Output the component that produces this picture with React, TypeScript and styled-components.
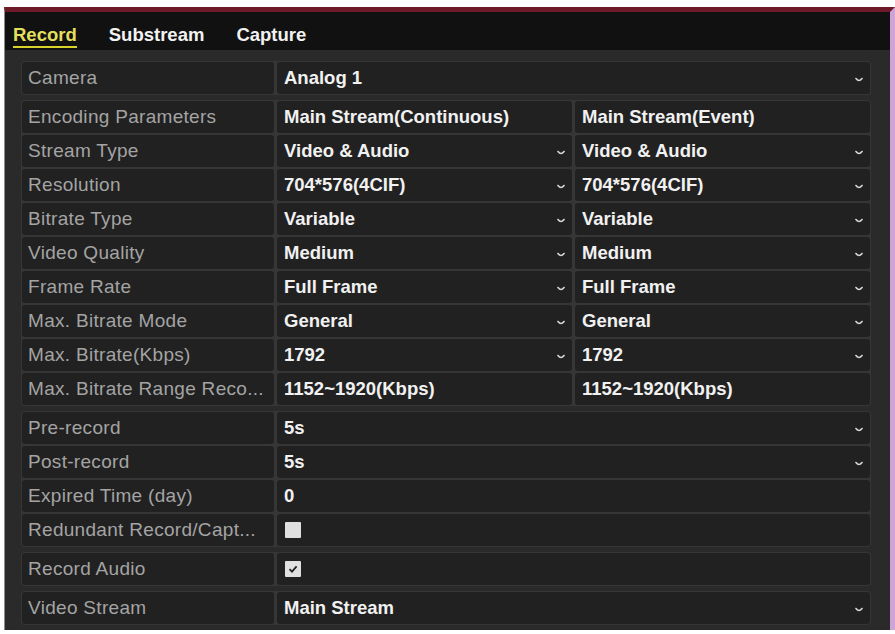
import React from 'react';
import styled, { createGlobalStyle } from 'styled-components';

interface fieldInt {
  label: string;
  values?: string[];
  select?: boolean;
  check?: 'on' | 'off';
}

const groups: fieldInt[][] = [
  [{ label: 'Camera', values: ['Analog 1'], select: true }],
  [
    { label: 'Encoding Parameters', values: ['Main Stream(Continuous)', 'Main Stream(Event)'] },
    { label: 'Stream Type', values: ['Video & Audio', 'Video & Audio'], select: true },
    { label: 'Resolution', values: ['704*576(4CIF)', '704*576(4CIF)'], select: true },
    { label: 'Bitrate Type', values: ['Variable', 'Variable'], select: true },
    { label: 'Video Quality', values: ['Medium', 'Medium'], select: true },
    { label: 'Frame Rate', values: ['Full Frame', 'Full Frame'], select: true },
    { label: 'Max. Bitrate Mode', values: ['General', 'General'], select: true },
    { label: 'Max. Bitrate(Kbps)', values: ['1792', '1792'], select: true },
    { label: 'Max. Bitrate Range Reco...', values: ['1152~1920(Kbps)', '1152~1920(Kbps)'] },
  ],
  [
    { label: 'Pre-record', values: ['5s'], select: true },
    { label: 'Post-record', values: ['5s'], select: true },
    { label: 'Expired Time (day)', values: ['0'] },
    { label: 'Redundant Record/Capt...', check: 'off' },
  ],
  [{ label: 'Record Audio', check: 'on' }],
  [{ label: 'Video Stream', values: ['Main Stream'], select: true }],
];

const tabs = ['Record', 'Substream', 'Capture'];

const Chevron: React.FC = () => (
  <ChevronIcon width="8" height="6" viewBox="0 0 8 6">
    <path d="M1 1.5 Q4 5.5 7 1.5" fill="none" stroke="currentColor" strokeWidth="1.6" strokeLinecap="round" />
  </ChevronIcon>
);

const App: React.FC = () => {
  const renderValue = (field: fieldInt) => {
    if (field.check) {
      return (
        <ValueCell>
          <CheckBox>
            {field.check === 'on' && (
              <svg width="12" height="12" viewBox="0 0 12 12">
                <path d="M2.5 6.2 L5 8.6 L9.6 3.4" fill="none" stroke="#222" strokeWidth="1.8" />
              </svg>
            )}
          </CheckBox>
        </ValueCell>
      );
    }
    return (field.values || []).map((value, idx) => (
      <ValueCell key={idx}>
        <ValueText>{value}</ValueText>
        {field.select && <Chevron />}
      </ValueCell>
    ));
  };

  return (
    <>
      <GlobalStyle />
      <Frame>
        <TabBar>
          {tabs.map((tab, idx) => (
            <Tab key={tab} active={idx === 0}>
              {tab}
            </Tab>
          ))}
        </TabBar>
        <Body>
          {groups.map((group, gIdx) => (
            <Group key={gIdx}>
              {group.map((field) => (
                <Row key={field.label} split={(field.values || []).length > 1}>
                  <LabelCell>{field.label}</LabelCell>
                  {renderValue(field)}
                </Row>
              ))}
            </Group>
          ))}
        </Body>
      </Frame>
    </>
  );
};

export default App;

const GlobalStyle = createGlobalStyle`
  body {
    margin: 0;
    background: #ffffff;
    font-family: "Liberation Sans", Arial, sans-serif;
  }
`;

const Frame = styled.div`
  box-sizing: border-box;
  width: 891px;
  margin: 7px 0 0 4px;
  background: #2a2a2a;
  border-top: 5px solid #6e1a29;
  border-left: 1px solid #8c8c8c;
  border-right: 5px solid #cfa2d8;
  padding-bottom: 5px;
`;

const TabBar = styled.div`
  display: flex;
  gap: 32px;
  height: 38px;
  padding-left: 8px;
  background: #111111;
  box-sizing: border-box;
`;

const Tab = styled.div<{ active?: boolean }>`
  margin-top: 12px;
  height: 22px;
  line-height: 22px;
  font-size: 18.5px;
  font-weight: bold;
  color: ${(p) => (p.active ? '#e4df5c' : '#f2f2f2')};
  border-bottom: 2px solid ${(p) => (p.active ? '#d9d22a' : 'transparent')};
`;

const Body = styled.div`
  display: flex;
  flex-direction: column;
  gap: 5px;
  padding: 11px 19px 0 16px;
`;

const Group = styled.div`
  display: flex;
  flex-direction: column;
  gap: 2px;
  padding: 1px;
  background: #363636;
  border-radius: 4px;
`;

const Row = styled.div<{ split?: boolean }>`
  display: grid;
  grid-template-columns: ${(p) => (p.split ? '252px 1fr 1fr' : '252px 1fr')};
  column-gap: 3px;
  height: 32px;
`;

const Cell = styled.div`
  display: flex;
  align-items: center;
  background: #212121;
  border-radius: 3px;
  min-width: 0;
`;

const LabelCell = styled(Cell)`
  padding-left: 6px;
  font-size: 19px;
  letter-spacing: 0.3px;
  color: #a4a4a4;
  white-space: nowrap;
  overflow: hidden;
`;

const ValueCell = styled(Cell)`
  justify-content: space-between;
  padding: 0 7px 0 7px;
`;

const ValueText = styled.span`
  font-size: 18.5px;
  font-weight: bold;
  color: #f1f1f1;
  white-space: nowrap;
`;

const ChevronIcon = styled.svg`
  color: #d6d6d6;
  margin-top: 3px;
  flex-shrink: 0;
`;

const CheckBox = styled.div`
  display: flex;
  align-items: center;
  justify-content: center;
  width: 16px;
  height: 16px;
  margin-left: 1px;
  background: #e0e0e0;
  border-radius: 1px;
`;
